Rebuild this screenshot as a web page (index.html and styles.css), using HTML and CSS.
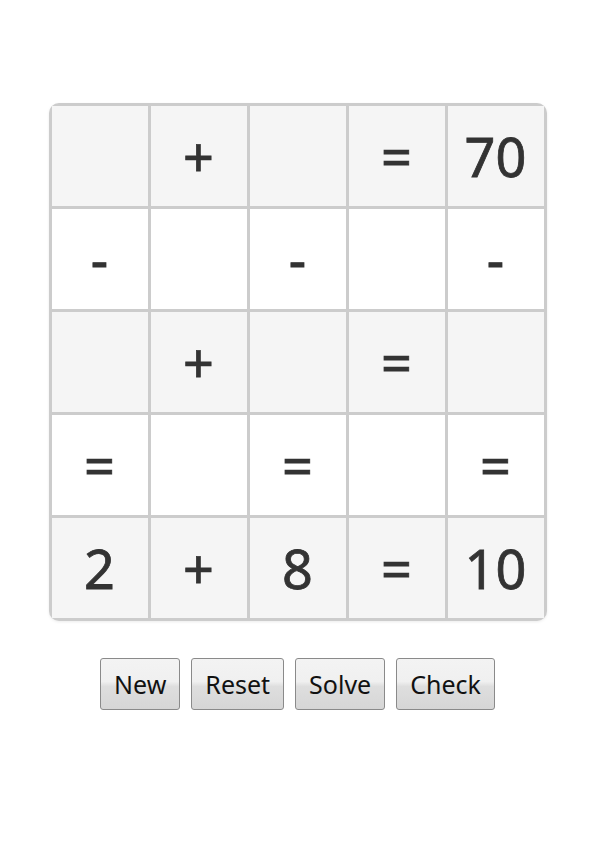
FILE: index.html
```html
<!DOCTYPE html>
<html lang="en">
<head>
  <meta charset="UTF-8">
  <meta name="viewport" content="width=device-width, initial-scale=1.0">
  <title>Math Square</title>
  <link rel="stylesheet" href="styles.css">
</head>
<body>

<!-- Puzzle grid -->
<div class="board">
  <div class="cell shade"></div>
  <div class="cell shade">+</div>
  <div class="cell shade"></div>
  <div class="cell shade">=</div>
  <div class="cell shade">70</div>

  <div class="cell">-</div>
  <div class="cell"></div>
  <div class="cell">-</div>
  <div class="cell"></div>
  <div class="cell">-</div>

  <div class="cell shade"></div>
  <div class="cell shade">+</div>
  <div class="cell shade"></div>
  <div class="cell shade">=</div>
  <div class="cell shade"></div>

  <div class="cell">=</div>
  <div class="cell"></div>
  <div class="cell">=</div>
  <div class="cell"></div>
  <div class="cell">=</div>

  <div class="cell shade">2</div>
  <div class="cell shade">+</div>
  <div class="cell shade">8</div>
  <div class="cell shade">=</div>
  <div class="cell shade">10</div>
</div>

<!-- Controls -->
<div class="controls">
  <button class="btn">New</button>
  <button class="btn">Reset</button>
  <button class="btn">Solve</button>
  <button class="btn">Check</button>
</div>

</body>
</html>
```

FILE: styles.css
```css
body {
  margin: 0;
  font-family: "Noto Sans", "Open Sans", sans-serif;
  background-color: #fff;
}

.board {
  display: grid;
  grid-template-columns: repeat(5, 96px);
  grid-auto-rows: 100px;
  gap: 3px;
  padding: 3px;
  width: max-content;
  margin: 103px auto 0;
  background-color: #cccccc;
  border-radius: 10px;
  overflow: hidden;
  box-shadow: 0 1px 3px rgba(0, 0, 0, 0.08);
}

.cell {
  display: flex;
  align-items: center;
  justify-content: center;
  background-color: #fff;
  color: #333;
  font-size: 54px;
  line-height: 1;
  -webkit-text-stroke: 0.8px #333;
}

.cell.shade {
  background-color: #f5f5f5;
}

.controls {
  display: flex;
  justify-content: center;
  gap: 11px;
  margin-top: 37px;
}

.btn {
  height: 52px;
  padding: 0 13px;
  font-family: inherit;
  font-size: 25px;
  color: #111;
  background: linear-gradient(#f3f3f3, #f0f0f0 45%, #dedede 55%, #d6d6d6);
  border: 1px solid #8a8a8a;
  border-radius: 3px;
}
```
